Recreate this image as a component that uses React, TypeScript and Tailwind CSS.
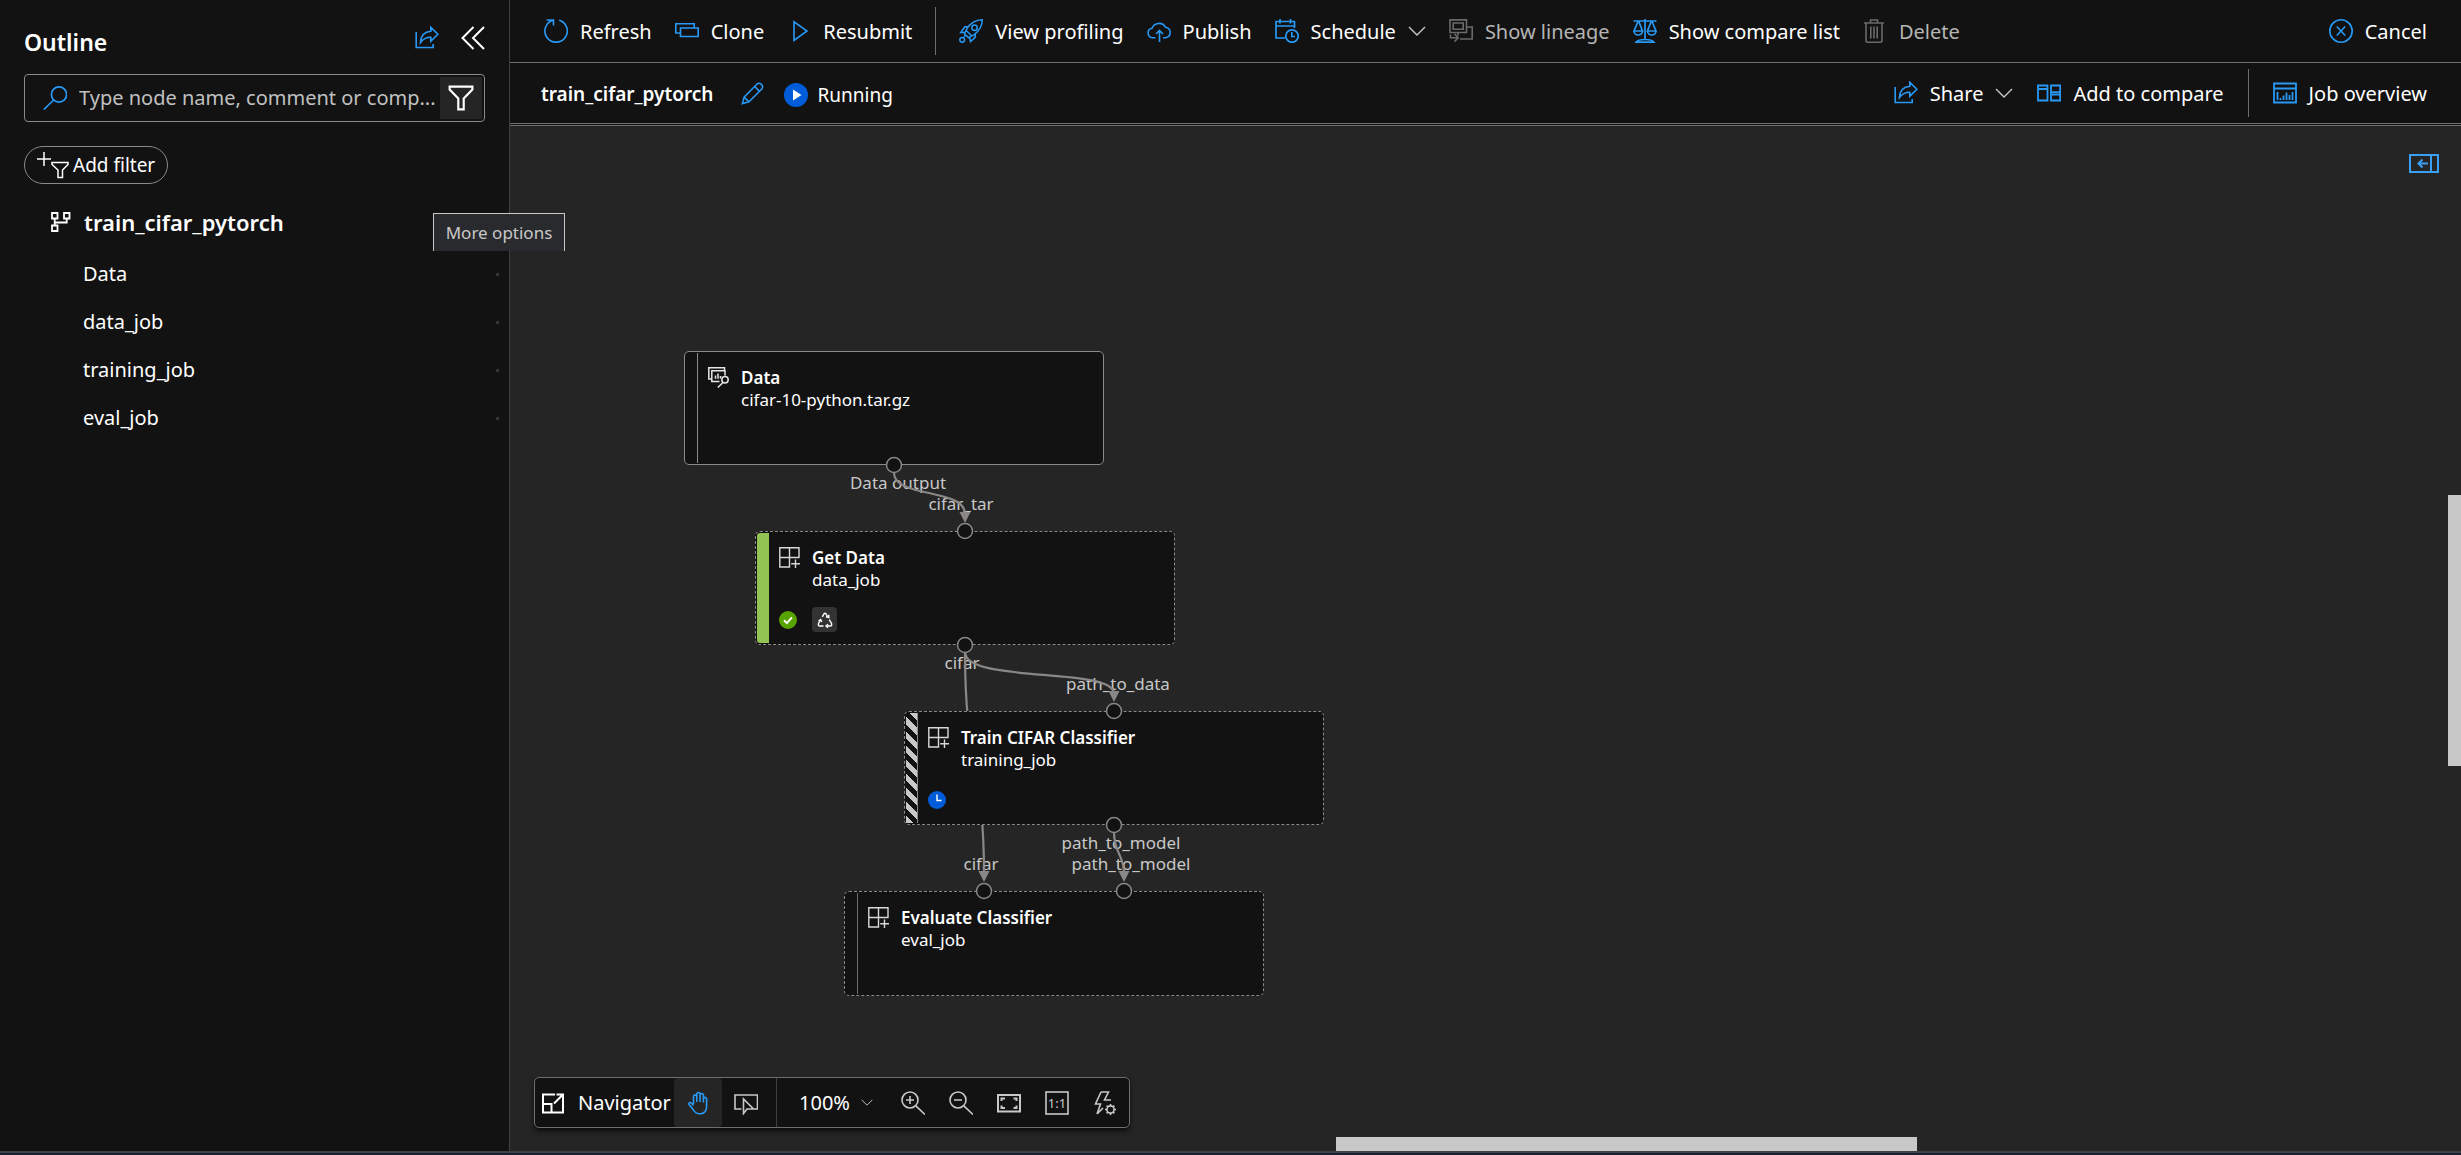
import type { ReactNode } from "react";

type IconProps = { children: ReactNode; className?: string; box?: string; stroke?: number };

function Icon({ children, className = "size-6 text-[#2899f5]", box = "0 0 24 24", stroke = 1.6 }: IconProps) {
  return (
    <svg viewBox={box} className={`shrink-0 ${className}`} fill="none" stroke="currentColor" strokeWidth={stroke} aria-hidden="true">
      {children}
    </svg>
  );
}

const Chevron = ({ className = "h-[10px] w-[18px] text-[#c8c8c8]" }: { className?: string }) => (
  <Icon box="0 0 18 10" className={className} stroke={1.4}>
    <path d="M1 1l8 8 8-8" />
  </Icon>
);

const ShareIcon = () => (
  <Icon>
    <path d="M1.2 6v15.5h17V18M15.8 1.2l7 7-7 7v-4C11.300 11.200 8 12.800 5.500 16.500 5.800 10 9.500 5.700 15.800 5.200z" />
  </Icon>
);

const RefreshIcon = () => (
  <Icon>
    <path d="M15.200 1.200A11.200 11.200 0 1 1 9 1.200M2.500 1H9.500V6.500" />
  </Icon>
);

const CloneIcon = () => (
  <Icon>
    <path d="M5 14H.8V4.800H19.200V8.500M5.500 9H23.200V17.500H5.500z" />
  </Icon>
);

const PlayIcon = () => (
  <Icon>
    <path d="M7 2.800V21.500L20 12z" />
  </Icon>
);

const RocketIcon = () => (
  <Icon stroke={1.5}>
    <path d="M23.200.8C15.500 1 11.500 4.500 8.200 9L5.500 14.800 9.300 18.600 15 15.800C19.500 12.500 23.300 8.500 23.200.8zM9.200 7.800H5.800L1.800 13.500 6.200 13.500M16.200 14.900V18.300L11.500 22.500 10.600 18M7.200 11.500 12.600 16.800M5 17.800 6.300 16.500" />
    <circle cx="15.500" cy="8.700" r="2.700" />
    <circle cx="3.200" cy="20.800" r="2.400" />
  </Icon>
);

const PublishIcon = () => (
  <Icon>
    <path d="M8.500 18.800H5.500A4.800 4.800 0 0 1 5 9.300 7.500 7.500 0 0 1 18.600 8.300 5.300 5.300 0 0 1 18.500 18.800H16M12.500 23V11.500M9 15l3.500-3.500L16 15" />
  </Icon>
);

const ScheduleIcon = () => (
  <Icon stroke={1.7}>
    <path d="M10 19H1V2.500H19.500V9M1 7H19.500M5 0V4.500M15.500 0V4.500" />
    <circle cx="17" cy="17" r="6.200" />
    <path d="M16.800 13V17.500H20" />
  </Icon>
);

const LineageIcon = () => (
  <Icon className="size-6 text-[#6a6a6a]">
    <path d="M1 .9H17.500V13.500H1zM4.200 4H14.200V10.200H4.200zM17.500 8H23.200V20H11M9 13.500V16.500M1.500 15.500V18.800H9M5.500 15l3.700 3.800-3.700 3.800" />
  </Icon>
);

const ScalesIcon = () => (
  <Icon stroke={1.7}>
    <path d="M.5 2H23.500M12 0V21M5 2.500 1 12H9.500L5.800 2.500M18.200 2.500 14.500 12H23L19 2.500M1 12A4.250 4 0 0 0 9.500 12M14.500 12A4.250 4 0 0 0 23 12M3 23.200C5 20.500 8 20.500 12 20.500S19 20.500 21 23.200z" />
  </Icon>
);

const TrashIcon = () => (
  <Icon className="size-6 text-[#6a6a6a]">
    <path d="M1 4H21M7.500 4V1H14.500V4M3 4V21.500Q3 23.200 4.700 23.200H17.300Q19 23.200 19 21.500V4M7.800 7.500V19.500M11 7.500V19.500M14.200 7.500V19.500" />
  </Icon>
);

const CancelIcon = () => (
  <Icon>
    <circle cx="12" cy="12" r="11.200" />
    <path d="M7.800 7.500l8.400 9M16.200 7.500l-8.400 9" />
  </Icon>
);

const PencilIcon = () => (
  <Icon className="size-[23px] text-[#2899f5]">
    <path d="M1.500 22.500 3.200 15.800 16.500 2.300Q19 .2 21.300 2.500T21.700 7.300L8.300 20.700zM3.200 15.800 8.300 20.700M14.200 4.600l5.200 5.200" />
  </Icon>
);

const CompareIcon = () => (
  <Icon stroke={1.8}>
    <path d="M1 4.500H10.500V19.500H1zM1 8H10.500M14 4.500H23.200V19.500H14zM14 11.200H23.200M14 13.500H23.200" />
  </Icon>
);

const OverviewIcon = () => (
  <Icon stroke={1.8}>
    <path d="M1 2.500H23V21.500H1zM1 7.500H23M4.500 11V19M7.500 17V19M10.500 14.500V19M13.500 11.500V19M16.500 14V19M19.500 11V19" />
  </Icon>
);

const FilterShape = () => <path d="M1.500 1.500H22.500V4.200L14.500 12.500V22.500H9.500V12.500L1.500 4.200z" />;

const ModuleIcon = () => (
  <Icon className="size-[21px] text-[#d8d8d8]" box="0 0 21 21" stroke={1.4}>
    <path d="M.8.8H20V10.500H.8zM.8 10.500V20H10.500V.8M16.500 12.500V21M12.200 16.700H21" />
  </Icon>
);

const DataIcon = () => (
  <Icon className="size-[21px] text-[#e6e6e6]" box="0 0 21 21" stroke={1.5}>
    <path d="M3.500 12H.8V.8H16.500V3.500M11.500 14.500H3.800V3.800H17V8.500M7.500 8.500V11.800M10 6.500V11.800M12.500 9V11.500M15 15.500 9.800 20.500" />
    <circle cx="17" cy="12.800" r="3.200" />
  </Icon>
);

type Action = { label: string; icon: ReactNode; menu?: boolean; disabled?: boolean };

function ToolButton({ label, icon, menu, disabled }: Action) {
  return (
    <button type="button" disabled={disabled} className="flex items-center gap-3 whitespace-nowrap text-white disabled:text-[#b5b5b5]">
      {icon}
      <span className="pt-0.5">{label}</span>
      {menu && <Chevron />}
    </button>
  );
}

const jobActions: Action[] = [
  { label: "Refresh", icon: <RefreshIcon /> },
  { label: "Clone", icon: <CloneIcon /> },
  { label: "Resubmit", icon: <PlayIcon /> },
];

const graphActions: Action[] = [
  { label: "View profiling", icon: <RocketIcon /> },
  { label: "Publish", icon: <PublishIcon /> },
  { label: "Schedule", icon: <ScheduleIcon />, menu: true },
  { label: "Show lineage", icon: <LineageIcon />, disabled: true },
  { label: "Show compare list", icon: <ScalesIcon /> },
  { label: "Delete", icon: <TrashIcon />, disabled: true },
];

const Divider = () => <span className="h-12 w-px bg-[#6e6e6e]" />;

function Outline() {
  return (
    <aside className="relative z-10 flex w-[510px] shrink-0 flex-col border-r border-[#3f3f3f] bg-[#121212]">
      <header className="flex h-[74px] items-start px-6 pt-[22px]">
        <h2 className="text-[23px] leading-10 font-semibold">Outline</h2>
        <button type="button" aria-label="Share outline" className="ml-auto flex h-8 items-center">
          <ShareIcon />
        </button>
        <button type="button" aria-label="Collapse outline" className="ml-[22px] flex h-8 items-center">
          <Icon className="size-6 text-white" stroke={2}>
            <path d="M12.500 1 1.500 12 12.500 23M23 1 12 12 23 23" />
          </Icon>
        </button>
      </header>

      <div className="mx-6 flex h-12 items-center rounded-sm border border-[#8a8a8a] pr-[2px] pl-[18px]">
        <Icon className="size-6 text-[#2899f5]" stroke={1.7}>
          <circle cx="16" cy="8.500" r="7.600" />
          <path d="M10.700 14 .8 23.500" />
        </Icon>
        <input
          type="text"
          aria-label="Search nodes"
          placeholder="Type node name, comment or comp..."
          className="ml-3 min-w-0 flex-1 bg-transparent text-[20px] text-white outline-none placeholder:text-[#c0c0c0]"
        />
        <button type="button" aria-label="Filter" className="flex h-[42px] w-[42px] shrink-0 items-center justify-center bg-[#252525]">
          <Icon className="size-[26px] text-white" stroke={2}>
            <FilterShape />
          </Icon>
        </button>
      </div>

      <button type="button" className="mt-6 ml-6 flex h-[38px] items-center gap-1 self-start rounded-full border border-[#8a8a8a] pr-3 pl-3 text-[19px]">
        <Icon box="0 0 32 28" className="h-7 w-8 text-white" stroke={1.5}>
          <path d="M7 1V15M0 8H14" />
          <path d="M15 11.500H31V13.500L25.500 19V26.500H21V19L15 13.500z" />
        </Icon>
        Add filter
      </button>

      <nav aria-label="Job nodes" className="mt-4 flex flex-col">
        <a href="#job" className="mb-[6px] flex h-11 items-center gap-[13px] pl-[51px] text-[22px] font-semibold">
          <Icon className="size-5 text-white" box="0 0 20 20" stroke={1.8}>
            <path d="M1 1H6.500V6.500H1zM13 1H18.500V6.500H13zM1 13.500H6.500V19H1zM3.700 6.500V13.500M3.700 10.500H15.700V6.500" />
          </Icon>
          train_cifar_pytorch
        </a>
        {["Data", "data_job", "training_job", "eval_job"].map((name) => (
          <a key={name} href={`#${name}`} className="flex h-12 items-center justify-between pr-[10px] pl-[83px] text-[20px]">
            {name}
            <span className="size-[3px] bg-[#353535]" />
          </a>
        ))}
      </nav>

      <div role="tooltip" className="absolute top-[213px] left-[433px] flex h-[38px] w-[132px] items-center justify-center border border-b-0 border-[#c8c8c8] bg-[#292a2e] text-[17px] whitespace-nowrap text-[#c8c8c8]">
        More options
      </div>
    </aside>
  );
}

type GraphNode = {
  title: string;
  sub: string;
  place: string;
  stripe: string;
  icon: ReactNode;
  badges?: ReactNode;
};

const nodes: GraphNode[] = [
  {
    title: "Data",
    sub: "cifar-10-python.tar.gz",
    place: "left-[174px] top-[225px] h-[114px] border-[#8a8a8a]",
    stripe: "border-r border-[#8a8a8a]",
    icon: <DataIcon />,
  },
  {
    title: "Get Data",
    sub: "data_job",
    place: "left-[245px] top-[405px] h-[114px] border-dashed border-[#8a8a8a]",
    stripe: "rounded-l-[3px] bg-[#92c353]",
    icon: <ModuleIcon />,
    badges: (
      <>
        <svg viewBox="0 0 18 18" className="size-[18px]" role="img" aria-label="Completed">
          <circle cx="9" cy="9" r="9" fill="#57a300" />
          <path d="M5 9.300l2.800 2.800L13 6.300" fill="none" stroke="#fff" strokeWidth="2" />
        </svg>
        <span className="flex size-[25px] items-center justify-center rounded bg-[#333333]">
          <svg viewBox="0 0 16 16" className="size-4 text-white" fill="none" stroke="currentColor" strokeWidth="1.400" role="img" aria-label="Reused">
            <path d="M5.300 4.800 7 1.800Q8 .6 9 1.800L10.500 4.500M12.300 7.700 14.500 11.500Q15.300 13.800 13 14H9.500M6.500 14H3Q.8 13.800 1.500 11.500L3.500 8" />
            <path d="M11.800 2.800V5.500L9 4.800M11 12.300 9 14l2 1.700M1.500 9l2.200-1.400L4.800 10" />
          </svg>
        </span>
      </>
    ),
  },
  {
    title: "Train CIFAR Classifier",
    sub: "training_job",
    place: "left-[394px] top-[585px] h-[114px] border-dashed border-[#8a8a8a]",
    stripe: "border-r border-[#8a8a8a] bg-[repeating-linear-gradient(45deg,#c8c8c8_0px,#c8c8c8_5px,#121212_5px,#121212_10px)]",
    icon: <ModuleIcon />,
    badges: (
      <svg viewBox="0 0 18 18" className="size-[18px]" role="img" aria-label="Queued">
        <circle cx="9" cy="9" r="9" fill="#015cda" />
        <path d="M9 3.500V9.500H13.500" fill="none" stroke="#fff" strokeWidth="1.400" />
      </svg>
    ),
  },
  {
    title: "Evaluate Classifier",
    sub: "eval_job",
    place: "left-[334px] top-[765px] h-[105px] border-dashed border-[#8a8a8a]",
    stripe: "border-r border-[#6a6a6a]",
    icon: <ModuleIcon />,
  },
];

const labels = [
  { text: "Data output", place: "left-[388px] top-[345px]" },
  { text: "cifar_tar", place: "left-[451px] top-[366px]" },
  { text: "cifar", place: "left-[452px] top-[525px]" },
  { text: "path_to_data", place: "left-[608px] top-[546px]" },
  { text: "path_to_model", place: "left-[611px] top-[705px]" },
  { text: "path_to_model", place: "left-[621px] top-[726px]" },
  { text: "cifar", place: "left-[471px] top-[726px]" },
];

const edges = [
  "M384 347C384 372 455 362 455 388",
  "M455 526C455 558 604 540 604 568",
  "M455 526C455 640 474 640 474 748",
  "M604 706C604 728 614 728 614 748",
];

const arrows = [
  [455, 397],
  [604, 576],
  [474, 756],
  [614, 756],
];

const ports = [
  [384, 339],
  [455, 405],
  [455, 519],
  [604, 585],
  [604, 699],
  [474, 765],
  [614, 765],
];

function Graph() {
  return (
    <>
      {labels.map((l) => (
        <span key={l.place} className={`absolute -translate-x-1/2 text-[17px] leading-6 whitespace-nowrap text-[#c8c8c8] ${l.place}`}>
          {l.text}
        </span>
      ))}
      <svg className="pointer-events-none absolute inset-0 size-full" aria-hidden="true">
        {edges.map((d) => (
          <path key={d} d={d} fill="none" stroke="#8a8886" strokeWidth="2.200" />
        ))}
        {arrows.map(([x, y]) => (
          <path key={`${x}-${y}`} d={`M${x - 5.500} ${y - 11}h11L${x} ${y}z`} fill="#8a8886" />
        ))}
      </svg>
      {nodes.map((n) => (
        <article key={n.title} className={`absolute flex w-[420px] rounded-[5px] border bg-[#121212] ${n.place}`}>
          <div className={`my-px ml-px w-3 shrink-0 ${n.stripe}`} />
          <div className="flex flex-col pt-[15px] pl-[10px]">
            <div className="flex gap-3">
              {n.icon}
              <div className="text-[17px] leading-[22px] whitespace-nowrap">
                <h3 className="font-semibold">{n.title}</h3>
                <p>{n.sub}</p>
              </div>
            </div>
            {n.badges && <div className="mt-4 flex h-[25px] items-center gap-[15px]">{n.badges}</div>}
          </div>
        </article>
      ))}
      <svg className="pointer-events-none absolute inset-0 size-full" aria-hidden="true">
        {ports.map(([x, y]) => (
          <circle key={`${x}-${y}`} cx={x} cy={y} r="7.500" fill="#121212" stroke="#8a8886" strokeWidth="1.500" />
        ))}
      </svg>
    </>
  );
}

const viewActions: { label: string; icon: ReactNode }[] = [
  {
    label: "Zoom in",
    icon: (
      <>
        <circle cx="9" cy="9" r="8" />
        <path d="M9 5V13M5 9H13M14.800 14.800 24 23.500" />
      </>
    ),
  },
  {
    label: "Zoom out",
    icon: (
      <>
        <circle cx="9" cy="9" r="8" />
        <path d="M5 9H13M14.800 14.800 24 23.500" />
      </>
    ),
  },
  {
    label: "Fit to screen",
    icon: <path strokeWidth={2} d="M1 4H23V20.500H1zM4.500 10V7.500H8M16.500 7.500H19.500V10M19.500 14.500V17H16.500M8 17H4.500V14.500" />,
  },
  {
    label: "Actual size",
    icon: (
      <>
        <rect x="1" y="1" width="22" height="22" />
        <text x="12" y="16.500" textAnchor="middle" fontSize="13" fill="currentColor" stroke="none">
          1:1
        </text>
      </>
    ),
  },
  {
    label: "Auto layout",
    icon: (
      <>
        <path d="M8 1H15.500L11.500 9H18M8 1 2.500 13H7.500L4 23M4 23l6-6" />
        <circle cx="17.500" cy="18.500" r="3.600" />
        <path d="M17.500 13V15M17.500 22V24M12 18.500H14M21 18.500H23M13.600 14.600l1.400 1.400M20 21l1.400 1.400M13.600 22.400l1.400-1.400M20 16l1.400-1.400" />
      </>
    ),
  },
];

function ViewBar() {
  return (
    <div className="absolute bottom-[23px] left-6 flex h-[51px] items-stretch rounded-[5px] border border-[#6e6e6e] bg-[#121212] shadow-md shadow-black/60">
      <button type="button" className="flex w-[139px] items-center gap-[14px] pl-[7px]">
        <Icon className="size-[22px] text-white" box="0 0 22 22" stroke={2}>
          <path d="M13 2.500H1V20.500H21V9M1 12H9.500V20.500M12 11.500 20.500 3M14.500 2.500H21V9" />
        </Icon>
        Navigator
      </button>
      <button type="button" aria-label="Pan" aria-pressed="true" className="flex w-12 items-center justify-center rounded-sm bg-[#252525]">
        <Icon>
          <path d="M7.500 13V5.200a1.700 1.700 0 0 1 3.300 0V11M10.800 10V2.800a1.700 1.700 0 0 1 3.300 0V11M14.100 10V3.800a1.700 1.700 0 0 1 3.300 0V11.500M17.400 7.500a1.700 1.700 0 0 1 3.200 0V15.500C20.600 20 18 22.800 14 22.800 10.500 22.800 8.800 21.500 7.500 19L3 13.500C2.400 12 4 10.800 5.300 12L7.500 14.500" />
        </Icon>
      </button>
      <button type="button" aria-label="Select" className="flex w-[55px] items-center border-r border-[#3f3f3f] pl-3">
        <Icon className="size-6 text-[#c8c8c8]">
          <path d="M7.500 18H1V4H23.500V18H20M9.500 8V22.500L13 18H19.500z" />
        </Icon>
      </button>
      <div className="relative flex w-28 items-center">
        <select aria-label="Zoom level" defaultValue="100%" className="size-full appearance-none bg-transparent pl-[22px] text-white">
          <option>100%</option>
        </select>
        <Chevron className="pointer-events-none absolute right-4 h-[7px] w-3 text-[#c8c8c8]" />
      </div>
      {viewActions.map((a) => (
        <button key={a.label} type="button" aria-label={a.label} className="flex w-12 items-center justify-center">
          <Icon className="size-6 text-[#c8c8c8]">{a.icon}</Icon>
        </button>
      ))}
    </div>
  );
}

export default function App() {
  return (
    <div className="flex h-screen flex-col overflow-hidden bg-[#121212] font-['Noto_Sans','Open_Sans',sans-serif] text-[20px] leading-7 text-white">
      <div className="flex min-h-0 flex-1">
        <Outline />
        <main className="flex min-w-0 flex-1 flex-col">
          <div role="toolbar" aria-label="Job actions" className="flex h-[63px] shrink-0 items-center gap-[23px] border-b border-[#6e6e6e] pr-[34px] pl-[34px]">
            {jobActions.map((a) => (
              <ToolButton key={a.label} {...a} />
            ))}
            <Divider />
            {graphActions.map((a) => (
              <ToolButton key={a.label} {...a} />
            ))}
            <div className="ml-auto flex">
              <ToolButton label="Cancel" icon={<CancelIcon />} />
            </div>
          </div>

          <div className="flex h-[61px] shrink-0 items-center border-b border-[#6e6e6e] pr-[34px] pl-[31px]">
            <h1 className="pt-0.5 text-[19px] font-semibold">train_cifar_pytorch</h1>
            <button type="button" aria-label="Rename" className="ml-7">
              <PencilIcon />
            </button>
            <span className="ml-5 flex items-center gap-[9px] pt-1 text-[19px]">
              <svg viewBox="0 0 24 24" className="size-6" aria-hidden="true">
                <circle cx="12" cy="12" r="12" fill="#015cda" />
                <path d="M9 6.500V17.500L17.500 12z" fill="#fff" />
              </svg>
              Running
            </span>
            <div className="ml-auto flex items-center gap-6">
              <ToolButton label="Share" icon={<ShareIcon />} menu />
              <ToolButton label="Add to compare" icon={<CompareIcon />} />
              <Divider />
              <ToolButton label="Job overview" icon={<OverviewIcon />} />
            </div>
          </div>

          <section aria-label="Pipeline graph" className="relative mt-px flex-1 overflow-hidden border-t border-[#6e6e6e] bg-[#252525]">
            <Graph />
            <button type="button" aria-label="Open side panel" className="absolute top-7 right-[22px]">
              <Icon className="h-[19px] w-[30px] text-[#3aa0f3]" box="0 0 30 19" stroke={2}>
                <path d="M1 1H29V18H1zM22 1V18M19 9.500H10M13.500 5.500 9.500 9.500l4 4" />
              </Icon>
            </button>
            <ViewBar />
            <div className="absolute top-[369px] right-0 h-[271px] w-[13px] bg-[#c8c8c8]" />
            <div className="absolute bottom-0 left-[826px] h-[14px] w-[581px] bg-[#c8c8c8]" />
          </section>
        </main>
      </div>
      <div className="h-1 shrink-0 border-t-2 border-[#3e4148] bg-[#1b2132]" />
    </div>
  );
}
